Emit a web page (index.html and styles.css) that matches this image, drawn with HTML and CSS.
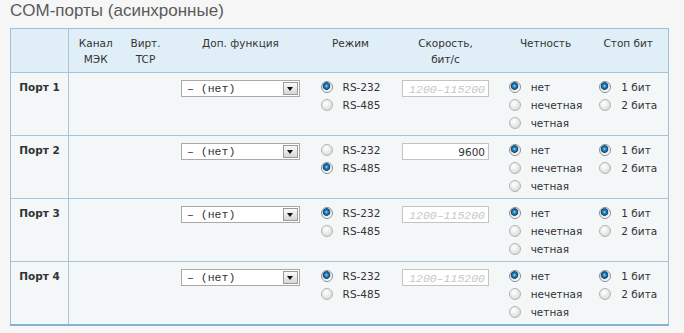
FILE: index.html
```html
<!doctype html>
<html lang="ru">
    <head>
        <meta charset="UTF-8" />
        <meta name="viewport" content="width=device-width, initial-scale=1.0" />
        <title>COM-порты</title>
        <link rel="stylesheet" href="styles.css">
    </head>
    <body>
        <h2 class="title">COM-порты (асинхронные)</h2>

        <table class="ports">
            <colgroup>
                <col class="c-port" />
                <col class="c-iec" />
                <col class="c-tcp" />
                <col class="c-func" />
                <col class="c-mode" />
                <col class="c-speed" />
                <col class="c-parity" />
                <col class="c-stop" />
            </colgroup>
            <thead>
                <tr>
                    <th></th>
                    <th>Канал<br />МЭК</th>
                    <th>Вирт.<br />TCP</th>
                    <th>Доп. функция</th>
                    <th>Режим</th>
                    <th>Скорость,<br />бит/с</th>
                    <th>Четность</th>
                    <th>Стоп бит</th>
                </tr>
            </thead>
            <tbody>
                <!-- Порт 1 -->
                <tr>
                    <td class="port">Порт 1</td>
                    <td></td>
                    <td></td>
                    <td>
                        <div class="select"><span class="select-text">– (нет)</span><span class="select-arrow"></span></div>
                    </td>
                    <td>
                        <div class="group">
                            <label><input type="radio" name="m1" checked /> RS-232</label>
                            <label><input type="radio" name="m1" /> RS-485</label>
                        </div>
                    </td>
                    <td><input class="speed" type="text" placeholder="1200–115200" /></td>
                    <td>
                        <div class="group">
                            <label><input type="radio" name="p1" checked /> нет</label>
                            <label><input type="radio" name="p1" /> нечетная</label>
                            <label><input type="radio" name="p1" /> четная</label>
                        </div>
                    </td>
                    <td>
                        <div class="group">
                            <label><input type="radio" name="s1" checked /> 1 бит</label>
                            <label><input type="radio" name="s1" /> 2 бита</label>
                        </div>
                    </td>
                </tr>
                <!-- Порт 2 -->
                <tr>
                    <td class="port">Порт 2</td>
                    <td></td>
                    <td></td>
                    <td>
                        <div class="select"><span class="select-text">– (нет)</span><span class="select-arrow"></span></div>
                    </td>
                    <td>
                        <div class="group">
                            <label><input type="radio" name="m2" /> RS-232</label>
                            <label><input type="radio" name="m2" checked /> RS-485</label>
                        </div>
                    </td>
                    <td><input class="speed" type="text" value="9600" placeholder="1200–115200" /></td>
                    <td>
                        <div class="group">
                            <label><input type="radio" name="p2" checked /> нет</label>
                            <label><input type="radio" name="p2" /> нечетная</label>
                            <label><input type="radio" name="p2" /> четная</label>
                        </div>
                    </td>
                    <td>
                        <div class="group">
                            <label><input type="radio" name="s2" checked /> 1 бит</label>
                            <label><input type="radio" name="s2" /> 2 бита</label>
                        </div>
                    </td>
                </tr>
                <!-- Порт 3 -->
                <tr>
                    <td class="port">Порт 3</td>
                    <td></td>
                    <td></td>
                    <td>
                        <div class="select"><span class="select-text">– (нет)</span><span class="select-arrow"></span></div>
                    </td>
                    <td>
                        <div class="group">
                            <label><input type="radio" name="m3" checked /> RS-232</label>
                            <label><input type="radio" name="m3" /> RS-485</label>
                        </div>
                    </td>
                    <td><input class="speed" type="text" placeholder="1200–115200" /></td>
                    <td>
                        <div class="group">
                            <label><input type="radio" name="p3" checked /> нет</label>
                            <label><input type="radio" name="p3" /> нечетная</label>
                            <label><input type="radio" name="p3" /> четная</label>
                        </div>
                    </td>
                    <td>
                        <div class="group">
                            <label><input type="radio" name="s3" checked /> 1 бит</label>
                            <label><input type="radio" name="s3" /> 2 бита</label>
                        </div>
                    </td>
                </tr>
                <!-- Порт 4 -->
                <tr>
                    <td class="port">Порт 4</td>
                    <td></td>
                    <td></td>
                    <td>
                        <div class="select"><span class="select-text">– (нет)</span><span class="select-arrow"></span></div>
                    </td>
                    <td>
                        <div class="group">
                            <label><input type="radio" name="m4" checked /> RS-232</label>
                            <label><input type="radio" name="m4" /> RS-485</label>
                        </div>
                    </td>
                    <td><input class="speed" type="text" placeholder="1200–115200" /></td>
                    <td>
                        <div class="group">
                            <label><input type="radio" name="p4" checked /> нет</label>
                            <label><input type="radio" name="p4" /> нечетная</label>
                            <label><input type="radio" name="p4" /> четная</label>
                        </div>
                    </td>
                    <td>
                        <div class="group">
                            <label><input type="radio" name="s4" checked /> 1 бит</label>
                            <label><input type="radio" name="s4" /> 2 бита</label>
                        </div>
                    </td>
                </tr>
            </tbody>
        </table>
    </body>
</html>
```

FILE: styles.css
```css
body {
    margin: 0;
    padding: 0 10px;
    background-color: #f6f6f6;
    font-family: "DejaVu Sans", Verdana, sans-serif;
    font-size: 10.5px;
    color: #333;
}
.title {
    margin: 0;
    padding-top: 1px;
    font-family: "Liberation Sans", Arial, sans-serif;
    font-size: 17px;
    font-weight: normal;
    line-height: 20px;
    color: #5a5a5a;
}
.ports {
    margin-top: 7px;
    width: 658px;
    table-layout: fixed;
    border-collapse: collapse;
    border: 1px solid #9fc0d8;
    border-bottom: 2px solid #86b2d4;
}
.c-port { width: 58px; }
.c-iec { width: 54px; }
.c-tcp { width: 46px; }
.c-func { width: 144px; }
.c-mode { width: 76px; }
.c-speed { width: 114px; }
.c-parity { width: 86px; }
.c-stop { width: 80px; }

th {
    padding: 6px 2px 5px;
    line-height: 16px;
    font-weight: normal;
    text-align: center;
    vertical-align: top;
    background-color: #e6f2f8;
    background-image: radial-gradient(#d8ebf5 0.6px, transparent 0.8px);
    background-size: 2px 2px;
    border-bottom: 1px solid #a6c5db;
}
th:first-child {
    border-right: 1px solid #a6c5db;
}
td {
    height: 54px;
    padding: 5px 2px 3px;
    line-height: 18px;
    text-align: center;
    vertical-align: top;
    background-color: #f4f7f8;
    border-bottom: 1px solid #a6c5db;
}
td.port {
    font-weight: bold;
    border-right: 1px solid #a6c5db;
}

.select {
    display: inline-flex;
    align-items: center;
    box-sizing: border-box;
    width: 119px;
    height: 17px;
    margin-top: 2px;
    padding: 0 1px 0 5px;
    border: 1px solid #a9a9a9;
    background: #fff;
    text-align: left;
    vertical-align: top;
}
.select-text {
    flex: 1;
    font-family: "Liberation Mono", "Courier New", monospace;
    font-size: 11.5px;
    line-height: 15px;
    color: #333;
}
.select-arrow {
    position: relative;
    box-sizing: border-box;
    width: 15px;
    height: 13px;
    border: 1px solid #9a9a9a;
    background: linear-gradient(#fafafa, #d6d6d6);
}
.select-arrow::after {
    content: "";
    position: absolute;
    left: 3px;
    top: 4px;
    border-left: 3.5px solid transparent;
    border-right: 3.5px solid transparent;
    border-top: 4px solid #111;
}

.group {
    display: inline-block;
    vertical-align: top;
    text-align: left;
}
.group label {
    display: flex;
    align-items: center;
    height: 18px;
    gap: 10px;
    white-space: nowrap;
}
input[type="radio"] {
    appearance: none;
    -webkit-appearance: none;
    margin: 0;
    width: 12px;
    height: 12px;
    border-radius: 50%;
    border: 1px solid #b4b4b4;
    background: radial-gradient(circle at 40% 35%, #ffffff 0, #f2f2f2 30%, #cfcfcf 100%);
    box-sizing: border-box;
}
input[type="radio"]:checked {
    border-color: #8f8f8f;
    background: radial-gradient(circle at 45% 40%, #a6dcf5 0, #3a8cc4 1.3px, #0e4f82 3.2px, #1a5f90 3.6px, #e2e2e2 4.1px, #ffffff 5.5px);
}

.speed {
    box-sizing: border-box;
    width: 87px;
    height: 17px;
    margin: 2px 0 0;
    padding: 0 3px;
    border: 1px solid #c4c4c4;
    background: #fff;
    font-family: "DejaVu Sans", Verdana, sans-serif;
    font-size: 10.5px;
    color: #333;
    text-align: right;
    vertical-align: top;
}
.speed::placeholder {
    font-family: "Liberation Mono", "Courier New", monospace;
    font-style: italic;
    font-size: 11.5px;
    color: #c8c8c8;
}
```
